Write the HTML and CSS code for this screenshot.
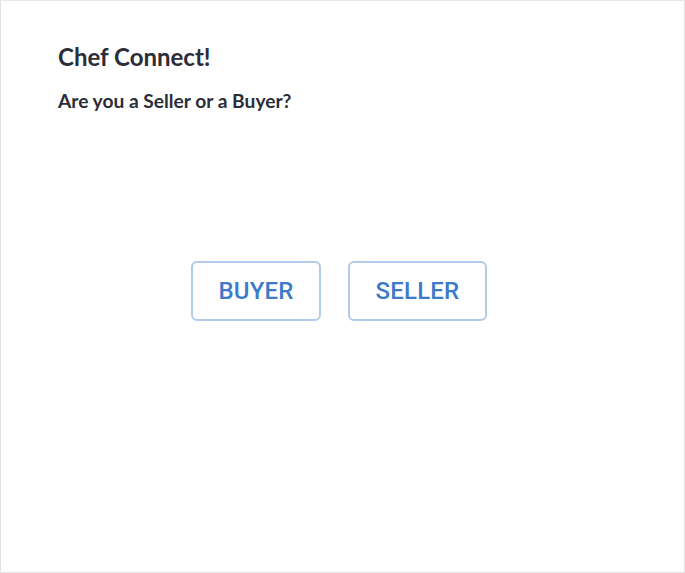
FILE: index.html
```html
<!DOCTYPE html>
<html>
<head>
<meta charset="utf-8">
<link rel="stylesheet" href="styles.css">
</head>
<body>
<div class="frame">
  <header class="head">
    <h1 class="title">Chef Connect!</h1>
    <p class="question">Are you a Seller or a Buyer?</p>
  </header>
  <div class="choices">
    <button class="choice choice-buyer">BUYER</button>
    <button class="choice choice-seller">SELLER</button>
  </div>
</div>
</body>
</html>
```

FILE: styles.css
```css
html, body {
  margin: 0;
  padding: 0;
  background: #ffffff;
}
.frame {
  box-sizing: border-box;
  width: 685px;
  height: 573px;
  border: 1px solid #e2e2e2;
  border-top-color: #e8e8e8;
  display: flex;
  flex-direction: column;
  font-family: "Lato", "Open Sans", sans-serif;
  color: #2b2d38;
}
.head {
  padding: 41px 0 0 57px;
}
.title {
  margin: 0;
  font-size: 24px;
  font-weight: 700;
  line-height: 30px;
}
.question {
  margin: 16px 0 0;
  font-size: 19.2px;
  font-weight: 700;
  line-height: 26px;
}
.choices {
  display: flex;
  justify-content: center;
  gap: 27px;
  margin-top: 147px;
  padding-right: 7px;
}
.choice {
  box-sizing: border-box;
  height: 60px;
  background: #ffffff;
  border: 2px solid #b1cbeb;
  border-radius: 6px;
  font-family: "Roboto", sans-serif;
  font-weight: 500;
  font-size: 24px;
  letter-spacing: 0.2px;
  color: #3b7bc9;
  padding: 0;
}
.choice-buyer { width: 130px; }
.choice-seller { width: 139px; }
```
